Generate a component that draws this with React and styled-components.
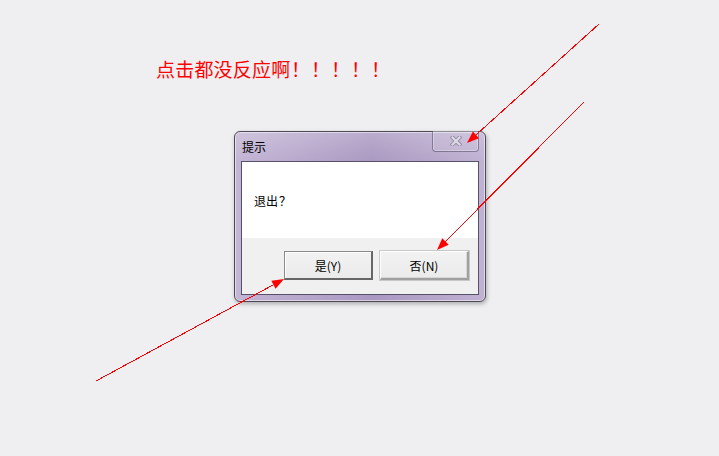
import React from "react";
import styled, { createGlobalStyle } from "styled-components";

const Global = createGlobalStyle`
  html, body { margin: 0; padding: 0; background: #efeff1; }
  body { font-family: "Noto Sans CJK SC", "Noto Sans", sans-serif; }
`;

const Page = styled.div`
  position: relative;
  width: 719px;
  height: 456px;
  padding-top: 55px;
  box-sizing: border-box;
  overflow: hidden;
  background: #efeff1;
`;

const Heading = styled.h1`
  margin: 0 0 0 156px;
  font-family: "Noto Sans CJK SC", sans-serif;
  font-size: 19px;
  line-height: 27px;
  font-weight: 400;
  letter-spacing: 0.2px;
  color: #ff0000;
`;

const Bang = styled.span`
  display: inline-block;
  width: 20px;
  text-align: center;
  letter-spacing: 0;
`;

const Dialog = styled.div`
  margin: 49px 0 0 234px;
  width: 252px;
  height: 171px;
  box-sizing: border-box;
  border: 1px solid #4d4957;
  border-radius: 6px;
  padding: 0 6px 6px;
  display: flex;
  flex-direction: column;
  background:
    linear-gradient(180deg, rgba(255,255,255,0.2) 0px, rgba(255,255,255,0) 30px),
    linear-gradient(90deg, #c3b5d5 0%, #b8a8cc 25%, #aa98c1 55%, #b6a6ca 80%, #c0b2d3 100%);
  box-shadow: inset 0 0 0 1px rgba(255,255,255,0.5), 1px 2px 4px rgba(0,0,0,0.28);
`;

const TitleBar = styled.div`
  height: 29px;
  display: flex;
  justify-content: space-between;
  align-items: flex-start;
  flex: none;
`;

const Title = styled.span`
  font-size: 12px;
  line-height: 29px;
  padding-left: 1px;
  color: #000;
`;

const CloseButton = styled.div`
  width: 47px;
  height: 21px;
  margin-top: -1px;
  box-sizing: border-box;
  border: 1px solid rgba(78, 68, 98, 0.55);
  border-top: none;
  border-radius: 0 0 4px 4px;
  box-shadow: inset 0 0 0 1px rgba(255,255,255,0.3);
  background: rgba(255,255,255,0.08);
  display: flex;
  align-items: center;
  justify-content: center;
`;

const Client = styled.div`
  flex: 1;
  border: 1px solid #55516a;
  display: flex;
  flex-direction: column;
  background: #f0f0f0;
`;

const Message = styled.div`
  height: 76px;
  flex: none;
  background: #ffffff;
  display: flex;
  align-items: center;
  padding-left: 12px;
  font-size: 12px;
  color: #000;
`;

const Question = styled.span`
  display: inline-block;
  width: 12px;
  text-align: center;
  margin-left: 1px;
`;

const ButtonRow = styled.div`
  flex: 1;
  display: flex;
  justify-content: flex-end;
  align-items: flex-start;
  gap: 7px;
  padding: 13px 9px 0 0;
`;

const Button = styled.button`
  width: 89px;
  height: 29px;
  box-sizing: border-box;
  padding: 0;
  font-family: "Noto Sans CJK SC", sans-serif;
  font-size: 12px;
  color: #000;
  background: linear-gradient(180deg, #f2f2f2 0%, #ebebeb 100%);
  border-style: solid;
  border-width: 1px 2px 2px 1px;
  border-color: ${p =>
    p.$default ? "#8a8a8a #666666 #666666 #8a8a8a" : "#ffffff #a0a0a0 #a0a0a0 #ffffff"};
  box-shadow: ${p =>
    p.$default ? "inset 1px 1px 0 #ffffff" : "inset -1px -1px 0 #d8d8d8, 0 0 0 1px #c8c8c8"};
  display: flex;
  align-items: center;
  justify-content: center;
`;

const Overlay = styled.svg`
  position: absolute;
  left: 0;
  top: 0;
  pointer-events: none;
`;

function Arrow({ x1, y1, x2, y2 }) {
  const dx = x2 - x1;
  const dy = y2 - y1;
  const len = Math.hypot(dx, dy);
  const ux = dx / len;
  const uy = dy / len;
  const L = 12;
  const W = 4.5;
  const bx = x2 - ux * L;
  const by = y2 - uy * L;
  const px = -uy * W;
  const py = ux * W;
  const pts = `${x2},${y2} ${bx + px},${by + py} ${bx - px},${by - py}`;
  return (
    <g>
      <line x1={x1} y1={y1} x2={bx} y2={by} stroke="#ff0000" strokeWidth="1" shapeRendering="crispEdges" />
      <polygon points={pts} fill="#ff0000" />
    </g>
  );
}

export default function App() {
  return (
    <>
      <Global />
      <Page>
        <Heading>
          点击都没反应啊
          {["！", "！", "！", "！", "！"].map((c, i) => (
            <Bang key={i}>{c}</Bang>
          ))}
        </Heading>
        <Dialog>
          <TitleBar>
            <Title>提示</Title>
            <CloseButton>
              <svg width="12" height="10" viewBox="0 0 12 10">
                <path d="M2.5 1.5 L9.5 8.5 M9.5 1.5 L2.5 8.5" stroke="#928aa0" strokeWidth="4" strokeLinecap="square" />
                <path d="M2.5 1.5 L9.5 8.5 M9.5 1.5 L2.5 8.5" stroke="#dedae6" strokeWidth="2.2" strokeLinecap="square" />
              </svg>
            </CloseButton>
          </TitleBar>
          <Client>
            <Message>
              退出<Question>？</Question>
            </Message>
            <ButtonRow>
              <Button $default>是(Y)</Button>
              <Button>否(N)</Button>
            </ButtonRow>
          </Client>
        </Dialog>
        <Overlay width="719" height="456" viewBox="0 0 719 456">
          <Arrow x1={599} y1={24} x2={467} y2={143} />
          <Arrow x1={584} y1={102} x2={437} y2={250} />
          <Arrow x1={96} y1={381} x2={284} y2={279} />
        </Overlay>
      </Page>
    </>
  );
}
